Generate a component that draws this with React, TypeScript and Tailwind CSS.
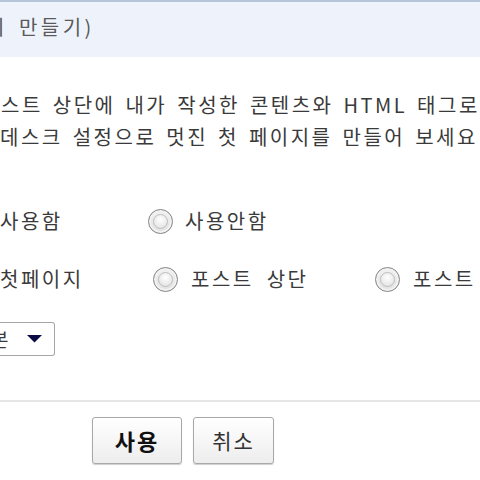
import React from "react";

const font = { fontFamily: '"Noto Sans CJK KR", "Noto Sans", sans-serif' };

function Radio() {
  return (
    <span className="relative inline-flex h-[25px] w-[25px] shrink-0 items-center justify-center rounded-full border border-[#858585] bg-[radial-gradient(circle_at_50%_40%,#ffffff_0%,#e6e6e6_55%,#c8c8c8_100%)] shadow-[inset_0_0_0_2px_#f2f2f2]">
      <span className="h-[15px] w-[15px] rounded-full border border-[#bdbdbd] bg-[radial-gradient(circle_at_50%_35%,#ffffff_0%,#dedede_100%)]" />
    </span>
  );
}

export default function App() {
  return (
    <div
      className="h-[480px] w-[480px] overflow-hidden bg-white text-[#3a3a3a]"
      style={font}
    >
      <div className="flex h-[57px] items-center overflow-hidden whitespace-nowrap border-t-2 border-[#b7c5da] bg-[#eef3fb] text-[20px] tracking-[3.5px] text-[#5a5a5a]">
        <span className="-ml-[14px] shrink-0 pb-[6px] [word-spacing:3px]">지 만들기)</span>
      </div>

      <div className="mt-[32px] whitespace-nowrap text-[20px] leading-[32px] tracking-[2.5px] [word-spacing:3px]">
        <div className="pl-[1px]">스트 상단에 내가 작성한 콘텐츠와 HTML 태그로</div>
        <div>데스크 설정으로 멋진 첫 페이지를 만들어 보세요</div>
      </div>

      <div className="mt-[53px] flex h-[30px] items-center whitespace-nowrap text-[20px] tracking-[2.5px]">
        <span className="w-[148px] shrink-0">사용함</span>
        <Radio />
        <span className="ml-[12px] shrink-0">사용안함</span>
      </div>

      <div className="mt-[28px] flex h-[30px] items-center whitespace-nowrap text-[20px] tracking-[2.5px]">
        <span className="w-[153px] shrink-0">첫페이지</span>
        <Radio />
        <span className="ml-[13px] w-[184px] shrink-0 [word-spacing:6px]">포스트 상단</span>
        <Radio />
        <span className="ml-[13px] shrink-0 [word-spacing:6px]">포스트 하단</span>
      </div>

      <div className="mt-[28px] flex h-[34px] w-[55px] items-center overflow-hidden rounded-r-[3px] border border-l-0 border-[#a6a6a6] bg-white text-[19px]">
        <span className="-ml-[9px] w-[36px] shrink-0">본</span>
        <svg width="15" height="8" viewBox="0 0 15 8" className="shrink-0">
          <polygon points="0,0 15,0 7.5,7.5" fill="#0b0b45" />
        </svg>
      </div>

      <div className="mt-[44px] h-[2px] bg-[#e6e6e6]" />

      <div className="mt-[15px] flex gap-[11px] pl-[92px]">
        <button className="flex h-[47px] w-[90px] items-center justify-center rounded-[3px] border border-[#a8a8a8] bg-[linear-gradient(#ffffff,#ededed)] text-[22px] font-bold tracking-[2px] text-[#111] shadow-[0_1px_1px_#cfcfcf]">
          사용
        </button>
        <button className="flex h-[47px] w-[81px] items-center justify-center rounded-[3px] border border-[#a8a8a8] bg-[linear-gradient(#ffffff,#ededed)] text-[21px] tracking-[2px] text-[#333] shadow-[0_1px_1px_#cfcfcf]">
          취소
        </button>
      </div>
    </div>
  );
}
